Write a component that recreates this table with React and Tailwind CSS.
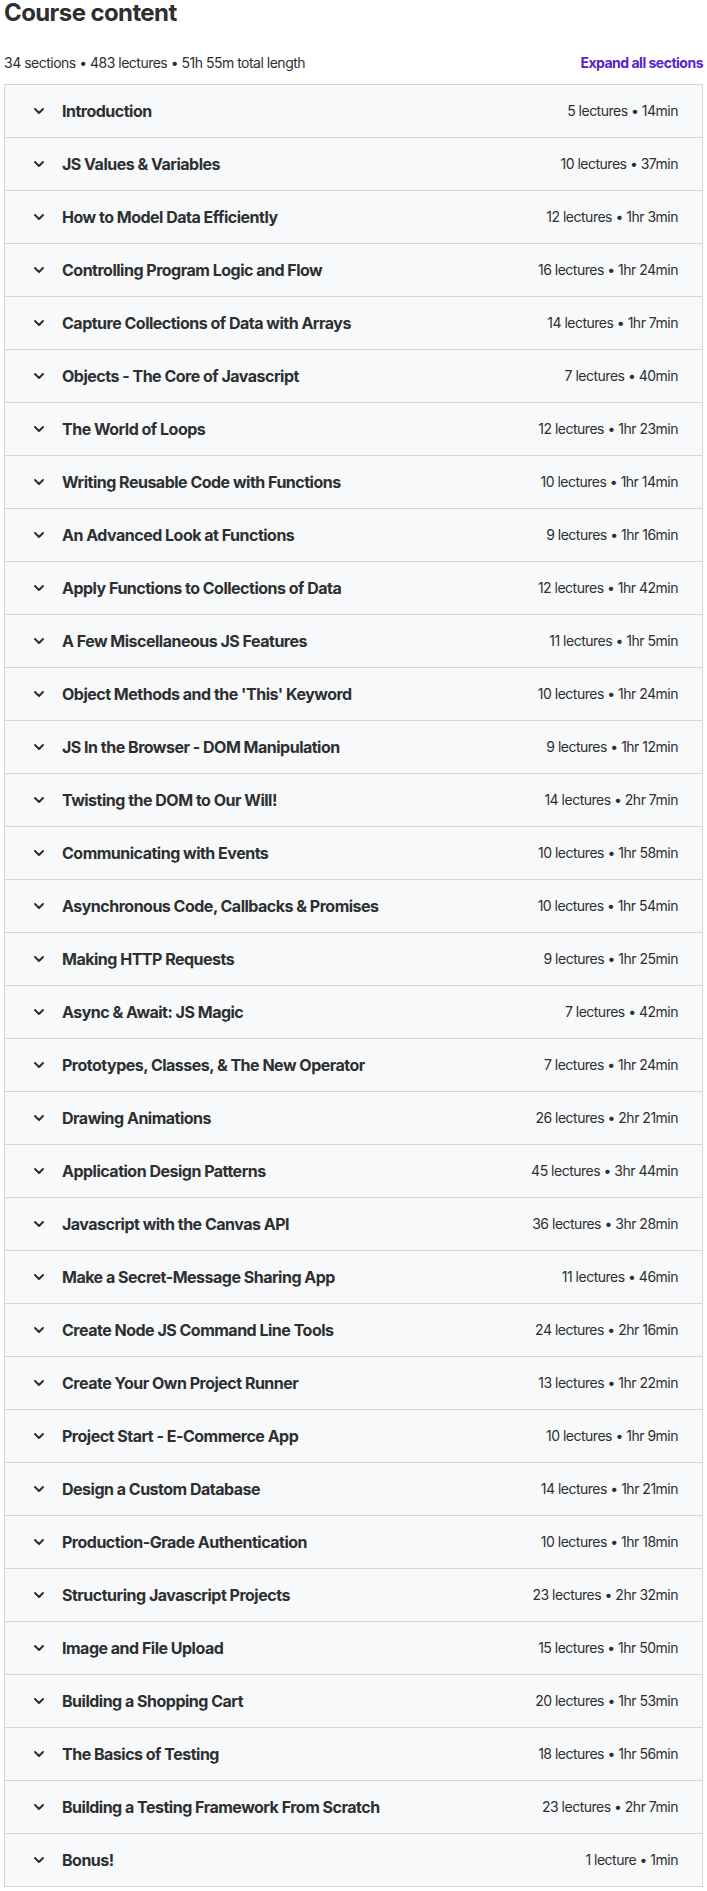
import React from "react";
import { ChevronDown } from "lucide-react";

const sections = [
  ["Introduction", "5 lectures • 14min"],
  ["JS Values & Variables", "10 lectures • 37min"],
  ["How to Model Data Efficiently", "12 lectures • 1hr 3min"],
  ["Controlling Program Logic and Flow", "16 lectures • 1hr 24min"],
  ["Capture Collections of Data with Arrays", "14 lectures • 1hr 7min"],
  ["Objects - The Core of Javascript", "7 lectures • 40min"],
  ["The World of Loops", "12 lectures • 1hr 23min"],
  ["Writing Reusable Code with Functions", "10 lectures • 1hr 14min"],
  ["An Advanced Look at Functions", "9 lectures • 1hr 16min"],
  ["Apply Functions to Collections of Data", "12 lectures • 1hr 42min"],
  ["A Few Miscellaneous JS Features", "11 lectures • 1hr 5min"],
  ["Object Methods and the 'This' Keyword", "10 lectures • 1hr 24min"],
  ["JS In the Browser - DOM Manipulation", "9 lectures • 1hr 12min"],
  ["Twisting the DOM to Our Will!", "14 lectures • 2hr 7min"],
  ["Communicating with Events", "10 lectures • 1hr 58min"],
  ["Asynchronous Code, Callbacks & Promises", "10 lectures • 1hr 54min"],
  ["Making HTTP Requests", "9 lectures • 1hr 25min"],
  ["Async & Await: JS Magic", "7 lectures • 42min"],
  ["Prototypes, Classes, & The New Operator", "7 lectures • 1hr 24min"],
  ["Drawing Animations", "26 lectures • 2hr 21min"],
  ["Application Design Patterns", "45 lectures • 3hr 44min"],
  ["Javascript with the Canvas API", "36 lectures • 3hr 28min"],
  ["Make a Secret-Message Sharing App", "11 lectures • 46min"],
  ["Create Node JS Command Line Tools", "24 lectures • 2hr 16min"],
  ["Create Your Own Project Runner", "13 lectures • 1hr 22min"],
  ["Project Start - E-Commerce App", "10 lectures • 1hr 9min"],
  ["Design a Custom Database", "14 lectures • 1hr 21min"],
  ["Production-Grade Authentication", "10 lectures • 1hr 18min"],
  ["Structuring Javascript Projects", "23 lectures • 2hr 32min"],
  ["Image and File Upload", "15 lectures • 1hr 50min"],
  ["Building a Shopping Cart", "20 lectures • 1hr 53min"],
  ["The Basics of Testing", "18 lectures • 1hr 56min"],
  ["Building a Testing Framework From Scratch", "23 lectures • 2hr 7min"],
  ["Bonus!", "1 lecture • 1min"],
];

const SectionRow = ({ title, meta }) => (
  <div className="flex h-[53px] items-center border-t border-[#d1d7dc] bg-[#f7f9fa] pl-[26px] pr-6 first:border-t-0 first:h-[52px]">
    <ChevronDown size={16} strokeWidth={3} className="shrink-0 text-[#2d2f31]" />
    <span className="ml-[15px] flex-1 text-base font-bold tracking-[-0.5px] text-[#2d2f31]">{title}</span>
    <span className="text-sm tracking-[-0.5px] text-[#2d2f31]">{meta}</span>
  </div>
);

export default function App() {
  return (
    <div className="bg-white px-1 pb-1 font-['Inter',sans-serif] text-[#2d2f31]">
      <h2 className="text-2xl font-bold leading-[26px] tracking-tight">Course content</h2>
      {/* summary line */}
      <div className="mt-[27px] flex items-center justify-between text-sm leading-5 tracking-[-0.5px]">
        <span>34 sections • 483 lectures • 51h 55m total length</span>
        <button className="font-bold text-[#5624d0]">Expand all sections</button>
      </div>
      <div className="mt-[11px] border border-[#d1d7dc]">
        {sections.map(([title, meta]) => (
          <SectionRow key={title} title={title} meta={meta} />
        ))}
      </div>
    </div>
  );
}
